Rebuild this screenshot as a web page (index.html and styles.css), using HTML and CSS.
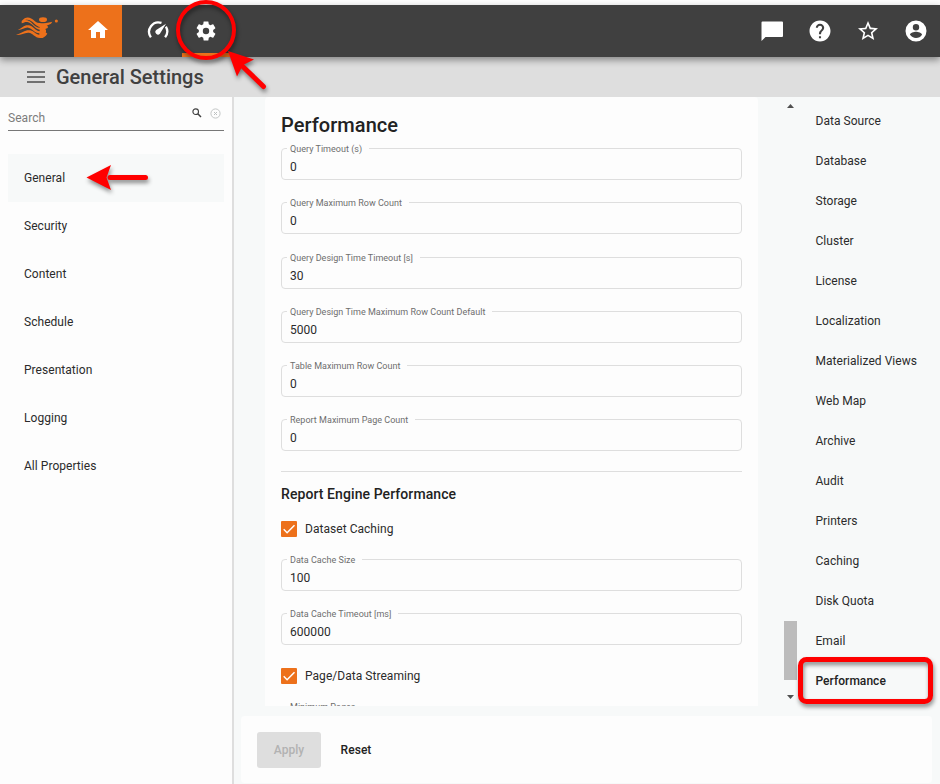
FILE: index.html
```html
<!DOCTYPE html>
<html lang="en">
<head>
<meta charset="utf-8">
<title>General Settings</title>
<link rel="stylesheet" href="styles.css">
</head>
<body>
<header class="topbar">
  <div class="logo">
    <svg width="42" height="24" viewBox="48 48 126 72" fill="#ed711b">
      <ellipse cx="129" cy="59" rx="12" ry="7"/>
      <circle cx="169" cy="63" r="4.6"/>
      <path d="M65 63C78 47 91 51 104 63C113 71 125 72 157 65L153 71L140 77Q146 78 143 84L136 87Q140 92 137 97L142 101Q132 116 120 114C104 113 99 99 86 98C72 97 62 107 48 105C66 98 77 88 91 91C103 93 107 104 118 104V100C103 99 98 86 85 83C74 81 66 91 54 90C66 83 74 73 87 76C101 79 106 93 119 94V89C105 88 98 71 85 67C78 64 73 67 65 70Z"/>
      <path d="M76 60C88 58 96 64 104 72C110 78 115 80 119 81V83.500C104 82 98 69 89 64Q82 60 76 60Z" fill="#404040"/>
    </svg>
  </div>
  <div class="tab home"><svg width="24" height="24" viewBox="0 0 24 24" fill="#fff"><path d="M10 20v-6h4v6h5v-8h3L12 3 2 12h3v8z"/></svg></div>
  <div class="tab gauge"><svg width="24" height="24" viewBox="0 0 24 24" fill="#fff"><path d="M15.500 4.900A9.400 9.400 0 0 0 4.900 19.300M19.900 8.700A9.400 9.400 0 0 1 19.100 19.300" fill="none" stroke="#fff" stroke-width="2.300"/><path d="M10.200 15.800a2.600 2.600 0 0 0 3.700 0L20 5.800 10.200 12.100a2.600 2.600 0 0 0 0 3.700z"/></svg></div>
  <div class="tab gear"><svg width="24" height="24" viewBox="0 0 24 24" fill="#fff"><path d="M19.14 12.94c.04-.3.06-.61.06-.94 0-.32-.02-.64-.07-.94l2.03-1.58c.18-.14.23-.41.12-.61l-1.92-3.32c-.12-.22-.37-.29-.59-.22l-2.39.96c-.5-.38-1.03-.7-1.62-.94l-.36-2.54c-.04-.24-.24-.41-.48-.41h-3.84c-.24 0-.43.17-.47.41l-.36 2.54c-.59.24-1.13.57-1.62.94l-2.39-.96c-.22-.08-.47 0-.59.22L2.74 8.87c-.12.21-.08.47.12.61l2.03 1.58c-.05.3-.09.63-.09.94s.02.64.07.94l-2.03 1.58c-.18.14-.23.41-.12.61l1.92 3.32c.12.22.37.29.59.22l2.39-.96c.5.38 1.03.7 1.62.94l.36 2.54c.05.24.24.41.48.41h3.84c.24 0 .44-.17.47-.41l.36-2.54c.59-.24 1.13-.56 1.62-.94l2.39.96c.22.08.47 0 .59-.22l1.92-3.32c.12-.22.07-.47-.12-.61zM12 15.2A3.2 3.2 0 1 1 12 8.800a3.200 3.200 0 0 1 0 6.400z"/></svg></div>
  <div class="actions">
    <svg width="24" height="24" viewBox="0 0 24 24" fill="#fff"><path d="M22 2.500H2.500Q1.500 2.500 1.500 3.500V22l4-4H22q1 0 1-1V3.500q0-1-1-1z"/></svg>
    <svg width="24" height="24" viewBox="0 0 24 24" fill="#fff"><path transform="translate(-.6 -.6) scale(1.050)" d="M12 2C6.480 2 2 6.480 2 12s4.480 10 10 10 10-4.480 10-10S17.520 2 12 2zm1 17h-2v-2h2v2zm2.070-7.750l-.9.920C13.450 12.900 13 13.500 13 15h-2v-.5c0-1.100.45-2.100 1.170-2.830l1.240-1.260c.37-.36.59-.86.59-1.410 0-1.100-.9-2-2-2s-2 .9-2 2H8c0-2.210 1.790-4 4-4s4 1.790 4 4c0 .88-.36 1.680-.93 2.250z"/></svg>
    <svg width="24" height="24" viewBox="0 0 24 24" fill="#fff"><path d="M22 9.240l-7.190-.62L12 2 9.190 8.630 2 9.240l5.460 4.730L5.820 21 12 17.270 18.180 21l-1.630-7.030L22 9.240zM12 15.400l-3.760 2.270 1-4.280-3.320-2.880 4.380-.38L12 6.100l1.710 4.040 4.380.38-3.320 2.880 1 4.280L12 15.400z"/></svg>
    <svg width="24" height="24" viewBox="0 0 24 24" fill="#fff"><path d="M12 1.500a10.500 10.500 0 1 0 0 21 10.500 10.500 0 0 0 0-21zM12 5a3.200 3.200 0 1 1 0 6.400A3.200 3.200 0 0 1 12 5zm0 14c-2.500 0-4.710-1.280-6-3.220.03-1.990 4-3.080 6-3.080s5.970 1.090 6 3.080A7.200 7.200 0 0 1 12 19z"/></svg>
  </div>
</header>
<div class="titlebar">
  <div class="burger"><i></i><i></i><i></i></div>
  <h1>General Settings</h1>
</div>
<div class="workspace">
  <aside class="sidebar">
    <div class="search">
      <span>Search</span>
      <svg width="10" height="10" viewBox="0 0 10 10" fill="none" stroke="#404040"><circle cx="3.700" cy="3.700" r="2.800" stroke-width="1.100"/><path d="M5.800 5.800L9 9" stroke-width="1.500"/></svg>
      <svg width="11" height="11" viewBox="0 0 11 11" fill="none" stroke="#bcc0c0"><circle cx="5.500" cy="5.500" r="4.600" stroke-width=".9"/><path d="M4 4l3 3M7 4L4 7"/></svg>
    </div>
    <nav class="menu">
      <a class="selected">General</a><a>Security</a><a>Content</a><a>Schedule</a><a>Presentation</a><a>Logging</a><a>All Properties</a>
    </nav>
  </aside>
  <main class="main">
    <div class="upper">
      <section class="card">
        <h2>Performance</h2>
        <div class="fields">
          <div class="field"><label>Query Timeout (s)</label>0</div>
          <div class="field"><label>Query Maximum Row Count</label>0</div>
          <div class="field"><label>Query Design Time Timeout [s]</label>30</div>
          <div class="field"><label>Query Design Time Maximum Row Count Default</label>5000</div>
          <div class="field"><label>Table Maximum Row Count</label>0</div>
          <div class="field"><label>Report Maximum Page Count</label>0</div>
        </div>
        <hr>
        <h3>Report Engine Performance</h3>
        <div class="check"><svg width="16" height="16" viewBox="0 0 16 16"><rect width="16" height="16" rx="1" fill="#ed711b"/><path d="M2.700 8.300l3.400 3.400L13.500 4.300" fill="none" stroke="#fff" stroke-width="1.500"/></svg>Dataset Caching</div>
        <div class="fields cache">
          <div class="field"><label>Data Cache Size</label>100</div>
          <div class="field"><label>Data Cache Timeout [ms]</label>600000</div>
        </div>
        <div class="check"><svg width="16" height="16" viewBox="0 0 16 16"><rect width="16" height="16" rx="1" fill="#ed711b"/><path d="M2.700 8.300l3.400 3.400L13.500 4.300" fill="none" stroke="#fff" stroke-width="1.500"/></svg>Page/Data Streaming</div>
        <div class="fields last"><div class="field"><label>Minimum Pages</label></div></div>
      </section>
      <div class="scroller">
        <svg width="7" height="4" viewBox="0 0 7 4"><path d="M0 4L3.500 0L7 4z" fill="#505050"/></svg>
        <div class="thumb"></div>
        <svg width="7" height="4" viewBox="0 0 7 4"><path d="M0 0L3.500 4L7 0z" fill="#505050"/></svg>
      </div>
      <nav class="toc">
        <a>Data Source</a><a>Database</a><a>Storage</a><a>Cluster</a><a>License</a><a>Localization</a><a>Materialized Views</a><a>Web Map</a><a>Archive</a><a>Audit</a><a>Printers</a><a>Caching</a><a>Disk Quota</a><a>Email</a><a class="current">Performance</a>
      </nav>
    </div>
    <footer class="buttons">
      <button class="apply" disabled>Apply</button>
      <button class="reset">Reset</button>
    </footer>
  </main>
</div>
<svg class="marks" width="940" height="784" viewBox="0 0 940 784">
  <g fill="none" stroke="#f00">
    <circle cx="206" cy="30" r="28" stroke-width="4"/>
    <path d="M236 60L263.500 86.500M110 177.500H145.500" stroke-width="5" stroke-linecap="round"/>
    <rect x="800.500" y="659.500" width="130" height="42" rx="6" stroke-width="5"/>
  </g>
  <path fill="#f00" d="M228 51L254 59.500L243 65L237 76.500zM86.500 177.500L111 165L106.500 177.500L111 190z"/>
</svg>
</body>
</html>
```
FILE: styles.css
```css
* { box-sizing: border-box; }
body { margin: 0; width: 940px; height: 784px; padding-top: 5px; overflow: hidden; background: #fdfdfd; color: #2b2b2b; font: 12px Roboto, sans-serif; letter-spacing: .04px; display: flex; flex-direction: column; }
svg { display: block; flex: none; }
.topbar { height: 52px; flex: none; display: flex; background: #404040; box-shadow: 0 3px 7px rgba(0,0,0,.4); position: relative; z-index: 1; }
.logo { width: 74px; padding: 11px 0 0 16px; }
.tab { width: 48px; padding: 13px 12px; }
.home { background: #ed711b; }
.gauge { margin-left: 12px; }
.gear { border-bottom: 4px solid #ed711b; padding-top: 14px; }
.actions { margin-left: auto; display: flex; gap: 24px; padding: 14px 12px 0 0; }
.titlebar { height: 40px; flex: none; background: #dedede; display: flex; align-items: center; padding-left: 27px; }
.burger { width: 18px; display: flex; flex-direction: column; gap: 3px; margin-right: 11px; }
.burger i { height: 2px; background: #707070; }
h1 { margin: 0; color: #404040; font-size: 20px; font-weight: 500; letter-spacing: 0; line-height: 40px; }
.workspace { flex: 1; display: flex; min-height: 0; }
.sidebar { width: 234px; border-right: 2px solid #dedede; padding: 0 8px; }
.search { height: 34px; border-bottom: 1px solid #777; display: flex; padding: 11px 3px 0 0; color: #7c7c7c; }
.search span { flex: 1; line-height: 20px; }
.search svg { margin-right: 8px; }
.search svg:last-child { margin-right: 0; }
.menu { margin-top: 23px; }
.menu a { display: block; height: 48px; line-height: 48px; padding-left: 16px; }
.menu .selected { background: #f7f9f9; }
.main { flex: 1; background: #f7f9f9; padding: 0 8px 0 7px; }
.upper { height: 609px; display: flex; }
.card { width: 493px; margin-left: 24px; padding: 16px 16px 0; background: #fdfdfd; border-radius: 4px 4px 0 0; overflow: hidden; }
h2 { margin: 0; font-size: 20px; font-weight: 500; line-height: 24px; letter-spacing: .05px; color: #222; }
.fields { display: flex; flex-direction: column; gap: 22.250px; margin-top: 11px; }
.field { position: relative; height: 32px; flex: none; border: 1px solid #dedede; border-radius: 4px; padding: 3px 8px 0; line-height: 30px; }
.field label { position: absolute; left: 5px; top: -6px; padding: 0 7px 0 3px; background: #fdfdfd; font-size: 9px; line-height: 12px; color: #6e6e6e; letter-spacing: .02px; white-space: nowrap; }
hr { border: 0; height: 1px; background: #dedede; margin: 19.750px 0 0; }
h3 { margin: 12px 0 0; font-size: 14px; font-weight: 500; line-height: 20px; letter-spacing: .08px; color: #222; }
.check { display: flex; align-items: center; gap: 8px; height: 16px; margin-top: 17px; }
.cache { margin-top: 22px; }
.cache + .check { margin-top: 23px; }
.last { margin-top: 22px; }
.scroller { width: 13px; margin-left: 26px; padding: 7px 0 7px; display: flex; flex-direction: column; align-items: center; }
.thumb { width: 13px; height: 59px; background: #bcbcbc; margin: auto 0 15px; }
.toc { padding: 4px 0 0 18.500px; }
.toc a { display: block; height: 40px; line-height: 40px; white-space: nowrap; }
.toc .current { font-weight: 500; color: #222; }
.buttons { height: 67px; margin-top: 10px; background: #fdfdfd; border-radius: 4px; display: flex; padding: 16px; }
button { font: 500 12px Roboto, sans-serif; letter-spacing: .05px; border: 0; border-radius: 3px; height: 36px; padding: 0; }
.apply { width: 64px; background: #dedede; color: #b2b2b2; }
.reset { width: 70px; background: none; color: #222; }
.marks { position: absolute; left: 0; top: 0; z-index: 2; filter: drop-shadow(1px 3px 2px rgba(0,0,0,.45)); pointer-events: none; }
```
